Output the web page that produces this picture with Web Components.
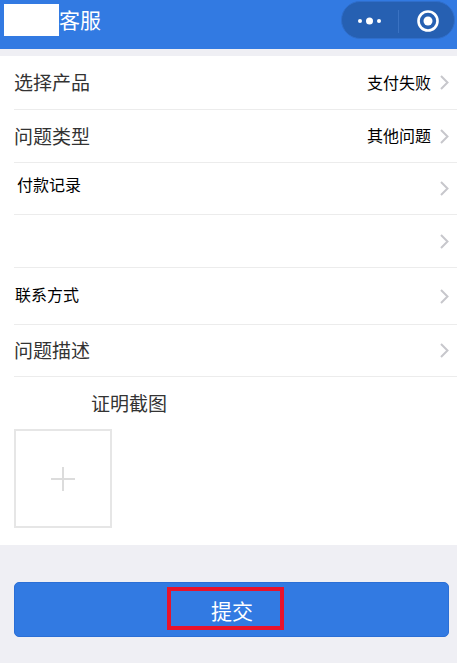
<!DOCTYPE html>
<html lang="zh">
<head>
<meta charset="utf-8" />
<title>客服</title>
<style>
  html, body { margin: 0; padding: 0; }
  body {
    width: 457px;
    height: 663px;
    overflow: hidden;
    background: #efeff4;
    font-family: "Liberation Sans", "Noto Sans CJK SC", sans-serif;
  }
  form-list { margin-top: 7px; }
</style>

<template id="nav-bar-template">
  <style>
    :host {
      display: flex;
      align-items: flex-start;
      height: 49px;
      padding: 0 2px 0 4px;
      box-sizing: border-box;
      background: #327ae2;
      color: #fff;
      font-size: 21px;
    }
    .mask { width: 55px; height: 32px; margin-top: 4px; background: #fff; }
    .title { line-height: 42px; flex: 1; }
    .capsule {
      display: flex;
      align-items: center;
      width: 114px;
      height: 38px;
      margin-top: 1px;
      box-sizing: border-box;
      border-radius: 19px;
      background: #2660b2;
      border: 1px solid #2f6ecb;
    }
    svg { display: block; }
  </style>
  <div class="mask"></div>
  <div class="title"><slot></slot></div>
  <div class="capsule">
    <svg width="112" height="36" viewBox="0 0 112 36">
      <circle cx="18" cy="19" r="2" fill="#fff"/>
      <circle cx="27.5" cy="19" r="3.5" fill="#fff"/>
      <circle cx="37" cy="19" r="2" fill="#fff"/>
      <rect x="56" y="8" width="1" height="23" fill="#3a72c2"/>
      <circle cx="86" cy="19" r="9.5" fill="none" stroke="#fff" stroke-width="2.6"/>
      <circle cx="86" cy="19" r="4.5" fill="#fff"/>
    </svg>
  </div>
</template>

<template id="form-row-template">
  <style>
    :host {
      display: flex;
      align-items: center;
      height: var(--row-height, 53px);
      box-sizing: border-box;
      margin-left: 14px;
      padding-right: 8px;
      border-bottom: 1px solid #ececec;
      color: #333;
      font-size: 19px;
    }
    :host([small]) { font-size: 16px; color: #000; }
    .label { flex: 1; padding-left: var(--label-indent, 0); position: relative; top: var(--label-shift, -1px); }
    .value { font-size: 16px; color: #000; position: relative; top: -1px; margin-right: 9px; }
    svg { display: block; }
  </style>
  <div class="label"><slot></slot></div>
  <div class="value"><slot name="value"></slot></div>
  <svg width="9" height="15" viewBox="0 0 9 15">
    <path d="M1 1l6.5 6.5L1 14" fill="none" stroke="#c7c7cc" stroke-width="2"/>
  </svg>
</template>

<template id="form-list-template">
  <style>
    :host { display: block; background: #fff; height: 489px; }
  </style>
  <slot></slot>
</template>

<template id="upload-field-template">
  <style>
    :host { display: block; padding: 15px 14px 0; color: #333; font-size: 19px; }
    .label { padding-left: 77px; line-height: 25px; }
    .box {
      display: flex;
      align-items: center;
      justify-content: center;
      width: 98px;
      height: 99px;
      margin-top: 12px;
      box-sizing: border-box;
      border: 2px solid #e6e6e6;
    }
    svg { display: block; }
  </style>
  <div class="label"><slot></slot></div>
  <div class="box">
    <svg width="24" height="24" viewBox="0 0 24 24">
      <path d="M0 12h24M12 0v24" stroke="#dcdcdc" stroke-width="2"/>
    </svg>
  </div>
</template>

<template id="submit-button-template">
  <style>
    :host {
      display: flex;
      align-items: center;
      justify-content: center;
      position: relative;
      height: 55px;
      margin: 37px 8px 0 14px;
      padding-left: 1px;
      box-sizing: border-box;
      border-radius: 5px;
      border: 1px solid #2b6fd6;
      background: #327ae2;
      color: #fff;
      font-size: 21px;
    }
    .mark {
      position: absolute;
      left: 152px;
      top: 4px;
      width: 117px;
      height: 43px;
      box-sizing: border-box;
      border: 4px solid #e8132b;
    }
  </style>
  <slot></slot>
  <div class="mark"></div>
</template>

<script>
  // all of these only clone their template into an open shadow root
  function define(name, templateId) {
    customElements.define(name, class extends HTMLElement {
      constructor() {
        super();
        const template = document.querySelector('#' + templateId);
        this.attachShadow({mode: 'open'}).appendChild(template.content.cloneNode(true));
      }
    });
  }
  define('nav-bar', 'nav-bar-template');
  define('form-row', 'form-row-template');
  define('form-list', 'form-list-template');
  define('upload-field', 'upload-field-template');
  define('submit-button', 'submit-button-template');
</script>
</head>
<body>
  <nav-bar>客服</nav-bar>
  <form-list>
    <form-row style="--row-height:54px">选择产品<span slot="value">支付失败</span></form-row>
    <form-row>问题类型<span slot="value">其他问题</span></form-row>
    <form-row small style="--row-height:52px; --label-indent:3px; --label-shift:-5px">付款记录</form-row>
    <form-row></form-row>
    <form-row small style="--row-height:57px; --label-indent:1px; --label-shift:-2px">联系方式</form-row>
    <form-row style="--row-height:52px">问题描述</form-row>
    <upload-field>证明截图</upload-field>
  </form-list>
  <submit-button>提交</submit-button>
</body>
</html>
